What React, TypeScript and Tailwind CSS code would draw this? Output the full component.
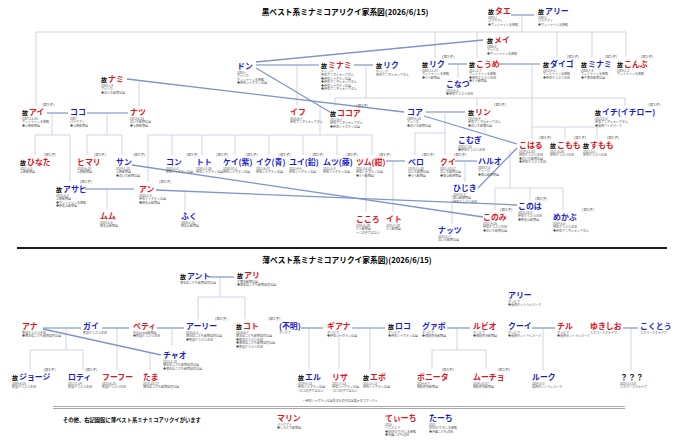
import React from "react"

type Node = {
    x: number
    y: number
    name: string
    c: "r" | "b" | "k"
    dead?: boolean
    twin?: boolean
    info?: string[]
}

const colorClass = {
    r: "text-[#e3121c]",
    b: "text-[#1e1ec8]",
    k: "text-[#222222]",
}

const topNodes: Node[] = [
    { x: 488, y: 11, name: "タエ", c: "r", dead: true, info: ["2003/?", "パラグアイ", "◆サンシャイン水族館"] },
    { x: 538, y: 11, name: "アリー", c: "b", dead: true, info: ["2003/?", "パラグアイ", "◆サンシャイン水族館"] },
    { x: 487, y: 40, name: "メイ", c: "r", dead: true, info: ["2006/5", "アメリカ", "◆サンシャイン水族館"] },
    { x: 237, y: 66, name: "ドン", c: "b", info: ["2005/?", "アメリカ", "サンシャイン水族館", "◆伊豆シャボテン公園"] },
    {
        x: 321, y: 65, name: "ミナミ", c: "r", dead: true,
        info: ["チリング", "伊豆アニマルキングダム", "◆伊豆シャボテン公園", "◆伊豆アニマルキングダム", "◆伊豆シャボテン公園", "◆伊豆アニマルキングダム"],
    },
    { x: 376, y: 65, name: "リク", c: "b", dead: true, info: ["チリング", "伊豆アニマルキングダム"] },
    { x: 422, y: 64, name: "リク", c: "b", dead: true, twin: true, info: ["2005/11/27", "サンシャイン水族館", "◆とべ動物園"] },
    {
        x: 469, y: 64, name: "こうめ", c: "r", dead: true,
        info: ["2011/2/7", "サンシャイン水族館", "◆伊豆どうぶつ王国", "◆とべ動物園"],
    },
    { x: 446, y: 84, name: "こなつ", c: "b", info: ["2015/5/2", "◆伊豆どうぶつ王国"] },
    { x: 543, y: 64, name: "ダイゴ", c: "b", dead: true, twin: true, info: ["2013/5/5", "サンシャイン水族館", "◆伊豆どうぶつ王国"] },
    { x: 581, y: 64, name: "ミナミ", c: "b", dead: true, twin: true, info: ["2006/7/8", "サンシャイン水族館", "◆千葉市動物公園"] },
    { x: 617, y: 64, name: "こんぶ", c: "r", dead: true, twin: true, info: ["2009/1/2", "サンシャイン水族館"] },
    { x: 101, y: 79, name: "ナミ", c: "r", dead: true, info: ["2003/?/9", "アメリカ", "◆のいち動物公園"] },
    { x: 22, y: 112, name: "アイ", c: "r", dead: true, twin: true, info: ["2007/12/26", "サンシャイン水族館", "◆上野動物園"] },
    { x: 70, y: 112, name: "ココ", c: "b", info: ["2007", "パラグアイ", "◆上野動物園"] },
    { x: 130, y: 112, name: "ナツ", c: "r", info: ["2013/6/25", "のいち動物公園", "◆上野動物園"] },
    { x: 290, y: 112, name: "イフ", c: "r", info: ["2016/6/7", "伊豆アニマルキングダム"] },
    { x: 330, y: 113, name: "ココア", c: "r", dead: true, twin: true, info: ["2012/6/7", "伊豆アニマルキングダム", "◆伊豆シャボテン公園"] },
    { x: 407, y: 112, name: "コア", c: "b", info: ["2009/5/23", "アメリカ", "◆のいち動物公園"] },
    { x: 468, y: 112, name: "リン", c: "r", dead: true, twin: true, info: ["2014/6/4", "伊豆アニマルキングダム", "◆のいち動物公園"] },
    { x: 595, y: 112, name: "イチ(イチロー)", c: "b", dead: true, twin: true, info: ["2013/8/3", "伊豆アニマルキングダム", "◆長崎バイオパーク"] },
    { x: 458, y: 140, name: "こむぎ", c: "b", info: ["2020/7/31", "◆伊豆どうぶつ王国"] },
    { x: 20, y: 162, name: "ひなた", c: "r", dead: true, twin: true, info: ["2021/2/5", "上野動物園"] },
    { x: 77, y: 162, name: "ヒマリ", c: "r", twin: true, info: ["2020/6/28", "上野動物園"] },
    { x: 116, y: 162, name: "サン", c: "b", twin: true, info: ["2019/1/13", "上野動物園", "◆のいち動物公園"] },
    { x: 166, y: 162, name: "コン", c: "b", twin: true, info: ["2020/2/3", "伊豆シャボテン公園"] },
    { x: 196, y: 162, name: "トト", c: "b", twin: true, info: ["2020/12/30", "伊豆シャボテン公園"] },
    { x: 223, y: 162, name: "ケイ(紫)", c: "b", twin: true, info: ["2020/10/1", "伊豆シャボテン公園"] },
    { x: 256, y: 162, name: "イク(青)", c: "b", twin: true, info: ["2021/6/27", "伊豆シャボテン公園"] },
    { x: 289, y: 162, name: "ユイ(鉛)", c: "b", twin: true, info: ["2022/4/4", "伊豆シャボテン公園"] },
    { x: 323, y: 162, name: "ムツ(藤)", c: "b", twin: true, info: ["2022/2/8", "伊豆シャボテン公園"] },
    { x: 356, y: 162, name: "ツム(紺)", c: "r", twin: true, info: ["2022/12/20", "伊豆シャボテン公園", "◆とべ動物園"] },
    { x: 408, y: 162, name: "ベロ", c: "b", twin: true, info: ["2019/11/30", "のいち動物公園", "◆とべ動物園"] },
    { x: 440, y: 162, name: "クイ", c: "r", twin: true, info: ["2021/10/17", "のいち動物公園", "◆東山動植物園"] },
    { x: 478, y: 161, name: "ハルオ", c: "b", info: ["2008/7/3", "アメリカ", "◆東山動植物園"] },
    { x: 519, y: 145, name: "こはる", c: "r", twin: true, info: ["2019/12/20", "伊豆どうぶつ王国", "◆のいち動物公園", "◆伊豆どうぶつ王国"] },
    { x: 550, y: 145, name: "こもも", c: "r", dead: true, twin: true, info: ["2021/3/20", "伊豆どうぶつ王国"] },
    { x: 583, y: 145, name: "すもも", c: "r", dead: true, twin: true, info: ["2022/3/1", "伊豆どうぶつ王国"] },
    { x: 453, y: 188, name: "ひじき", c: "b", info: ["2024/5/3", "東山動植物園", "伊豆どうぶつ王国"] },
    { x: 56, y: 189, name: "アサヒ", c: "b", dead: true, twin: true, info: ["2018/5/5", "上野動物園", "◆サンシャイン水族館", "◆野毛山動物園"] },
    { x: 139, y: 189, name: "アン", c: "r", twin: true, info: ["2020/2/3", "伊豆シャボテン公園", "◆野毛山動物園"] },
    { x: 100, y: 216, name: "ムム", c: "r", info: ["2025/5/5", "野毛山動物園"] },
    { x: 181, y: 216, name: "ふく", c: "b", info: ["2026/2/15", "野毛山動物園"] },
    { x: 356, y: 219, name: "こころ", c: "r", info: ["2025/6/30", "とべ動物園", "**この子ではない"] },
    { x: 386, y: 219, name: "イト", c: "r", info: ["2025/7/30", "とべ動物園"] },
    { x: 438, y: 230, name: "ナッツ", c: "b", info: ["2025/5/7", "のいち動物公園"] },
    { x: 483, y: 217, name: "このみ", c: "r", twin: true, info: ["2022/9/26", "伊豆どうぶつ王国", "◆のいち動物公園"] },
    { x: 518, y: 206, name: "このは", c: "b", twin: true, info: ["2023/10/3", "伊豆どうぶつ王国", "◆野毛山動物園"] },
    { x: 553, y: 217, name: "めかぶ", c: "b", twin: true, info: ["2024/5/5", "伊豆どうぶつ王国", "◆伊豆アニマルキングダム"] },
]

const midNodes: Node[] = [
    { x: 180, y: 276, name: "アント", c: "b", dead: true, info: ["埼玉県こども動物自然公園"] },
    { x: 237, y: 275, name: "アリ", c: "r", dead: true, info: ["千葉市動物公園", "◆埼玉県こども動物自然公園"] },
    { x: 508, y: 295, name: "アリー", c: "b", info: ["ボリビア", "◆長崎セントラルパーク"] },
    { x: 22, y: 326, name: "アナ", c: "r", info: ["那須どうぶつ王国", "◆埼玉県こども動物自然公園"] },
    { x: 83, y: 326, name: "ガイ", c: "b", info: ["那須どうぶつ王国"] },
    { x: 133, y: 326, name: "ベティ", c: "r", info: ["McFarland動物園", "◆那須どうぶつ王国"] },
    { x: 186, y: 326, name: "アーリー", c: "b", twin: true, info: ["2016/2/2", "埼玉県こども動物自然公園", "◆那須どうぶつ王国"] },
    {
        x: 236, y: 326, name: "コト", c: "r", dead: true, twin: true,
        info: ["2016/6/7", "埼玉県こども動物自然公園", "◆那須どうぶつ王国", "◆埼玉県こども動物自然公園", "◆那須どうぶつ王国"],
    },
    { x: 279, y: 326, name: "(不明)", c: "b", info: ["ボリビア"] },
    { x: 327, y: 326, name: "ギアナ", c: "r", info: ["ボリビア", "◆伊豆シャボテン公園"] },
    { x: 388, y: 326, name: "ロコ", c: "b", dead: true, info: ["ボリビア", "◆伊豆シャボテン公園"] },
    { x: 422, y: 326, name: "グァボ", c: "b", info: ["ボリビア", "◆相模原市動物園"] },
    { x: 473, y: 326, name: "ルビオ", c: "r", info: ["ボリビア", "◆相模原市動物園"] },
    { x: 508, y: 326, name: "クーイ", c: "b", info: ["ボリビア", "◆長崎セントラルパーク"] },
    { x: 557, y: 326, name: "チル", c: "r", info: ["ボリビア", "◆長崎セントラルパーク"] },
    { x: 590, y: 326, name: "ゆきしお", c: "r", info: ["ネオパークオキナワ"] },
    { x: 640, y: 326, name: "こくとう", c: "b", info: ["ネオパークオキナワ"] },
    { x: 163, y: 355, name: "チャオ", c: "b", info: ["2013/2/28", "埼玉県こども動物自然公園", "◆埼玉県こども動物自然公園"] },
    { x: 12, y: 377, name: "ジョージ", c: "b", dead: true, twin: true, info: ["2009/6/25", "那須どうぶつ王国"] },
    { x: 68, y: 377, name: "ロティ", c: "b", twin: true, info: ["2011/1/24", "那須どうぶつ王国"] },
    { x: 102, y: 377, name: "フーフー", c: "r", info: ["2013/6/25", "那須どうぶつ王国"] },
    { x: 143, y: 377, name: "たま", c: "r", info: ["2018/10/17", "埼玉県こども動物自然公園"] },
    { x: 298, y: 377, name: "エル", c: "b", dead: true, info: ["2019/5/13", "伊豆シャボテン公園", "*ロコの子ではない"] },
    { x: 332, y: 377, name: "リザ", c: "r", info: ["2021/7/22", "伊豆シャボテン公園", "*ロコの子ではない"] },
    { x: 363, y: 377, name: "エボ", c: "r", dead: true, info: ["2021/5/12", "伊豆シャボテン公園"] },
    { x: 417, y: 377, name: "ボニータ", c: "r", twin: true, info: ["2024/4/7", "相模原市動物園"] },
    { x: 473, y: 377, name: "ムーチョ", c: "r", twin: true, info: ["2024/10/27", "相模原市動物園"] },
    { x: 532, y: 377, name: "ルーク", c: "b", info: ["2024/3/3", "長崎セントラルパーク"] },
    { x: 620, y: 377, name: "？？？", c: "k", info: ["2025/12/20", "ネオパークオキナワ"] },
]

const bottomNodes: Node[] = [
    { x: 277, y: 418, name: "マリン", c: "r", info: ["パラグアイ", "◆しろとり動物園"] },
    { x: 385, y: 418, name: "てぃーち", c: "r", info: ["2016", "ベネズエラ", "◆DMMかりゆし水族館", "◆沖縄こどもの国"] },
    { x: 429, y: 418, name: "たーち", c: "b", info: ["2021", "DMMかりゆし水族館", "◆沖縄こどもの国"] },
]

// family lines, page coordinates
const topThin = [
    "M522 15V32", "M36 32H626", "M36 32V106", "M477 32V58", "M435 32V57", "M557 32V57", "M592 32V57", "M626 32V57",
    "M139 81V106", "M297 65V105", "M366 65V98", "M335 98H625", "M335 98V106", "M477 98V106", "M625 98V106",
    "M532 64V139", "M458 64V78",
    "M52 113V135", "M35 135H70", "M35 135V155", "M70 135V182",
    "M107 113V135", "M87 135H122", "M87 135V155", "M122 135V155",
    "M320 106V135", "M148 135H372", "M148 135V182", "M172 135V155", "M202 135V155", "M235 135V155", "M269 135V155",
    "M303 135V155", "M337 135V155", "M372 135V155",
    "M445 114V133", "M415 133H445", "M415 133V155", "M445 133V155", "M485 118V133",
    "M532 127H597", "M565 127V139", "M597 127V139",
    "M510 150V188", "M495 188H563", "M495 188V210", "M530 188V200", "M563 188V210",
    "M465 162V182", "M366 168V212", "M393 162V212", "M452 195V224", "M107 190V210", "M185 190V210",
]
const topPair = [
    "M511 15H534", "M47 113H68", "M87 113H128", "M256 65H319", "M354 65H373", "M448 64H467", "M499 64H540",
    "M426 112H465", "M386 161H405", "M455 161H477", "M85 189H134",
]
const topCross = [
    "M256 62L483 40", "M256 68L330 112", "M127 79L404 112", "M424 116L517 144", "M517 148L478 188",
    "M132 165L483 217", "M156 190L517 205",
]

const midThin = [
    "M220 277V297", "M198 297H245", "M198 297V319", "M245 297V319",
    "M66 328V350", "M30 350H83", "M30 350V370", "M83 350V370", "M117 328V370", "M172 328V346", "M150 353V370",
    "M309 328V369", "M339 333V369", "M370 328V369",
    "M457 328V350", "M432 350H486", "M432 350V369", "M486 350V369", "M543 328V370", "M631 328V370",
]
const midPair = [
    "M209 277H234", "M43 328H81", "M102 328H129", "M157 328H184", "M301 328H323", "M352 328H385", "M447 328H470",
    "M532 328H555", "M623 328H638",
]
const midCross = ["M43 329L161 355"]

function Lines({ viewBox, thin, pair, cross }: { viewBox: string; thin: string[]; pair: string[]; cross: string[] }) {
    return (
        <svg className="absolute inset-0 h-full w-full" viewBox={viewBox} fill="none">
            {thin.map((d) => (
                <path key={d} d={d} stroke="#c3cbdc" strokeWidth={0.8} />
            ))}
            {pair.map((d) => (
                <path key={d} d={d} stroke="#9eafd0" strokeWidth={1.6} />
            ))}
            {cross.map((d) => (
                <path key={d} d={d} stroke="#7f96c8" strokeWidth={1.3} />
            ))}
        </svg>
    )
}

function Animal({ n, top }: { n: Node; top: number }) {
    return (
        <div className="absolute whitespace-nowrap" style={{ left: n.x, top: n.y - top - 5 }}>
            <div className="relative flex items-end leading-[10px]">
                {n.dead && <span className="mr-[1px] text-[6px] leading-[9px] font-bold text-black">故</span>}
                <span className={`text-[7.9px] font-bold ${colorClass[n.c]}`}>{n.name}</span>
                {n.twin && (
                    <span className="absolute -top-[4px] left-[calc(100%-7px)] text-[3.8px] leading-[4px] text-[#444]">
                        (双1子)
                    </span>
                )}
            </div>
            {n.info && (
                <div className="mt-[1px] flex flex-col text-[3px] leading-[3.4px] text-[#555]">
                    {n.info.map((t, i) => (
                        <span key={i}>{t}</span>
                    ))}
                </div>
            )}
        </div>
    )
}

export default function App() {
    return (
        <div className="flex h-[446px] w-[680px] flex-col overflow-hidden bg-white font-['Noto_Sans_CJK_JP',sans-serif]">
            <section className="relative h-[247px] shrink-0">
                <Lines viewBox="0 0 680 247" thin={topThin} pair={topPair} cross={topCross} />
                <h1 className="relative pt-[7px] pl-[10px] text-center text-[7.7px] leading-[10px] font-bold text-black">
                    黒ベスト系ミナミコアリクイ家系図(2026/6/15)
                </h1>
                {topNodes.map((n, i) => (
                    <Animal key={i} n={n} top={0} />
                ))}
            </section>
            <div className="ml-[17px] mr-[13px] h-[2px] shrink-0 bg-[#1e1e1e]" />
            <section className="relative h-[157px] shrink-0">
                <Lines viewBox="0 249 680 157" thin={midThin} pair={midPair} cross={midCross} />
                <h1 className="relative pt-[6px] pl-[14px] text-center text-[7.7px] leading-[10px] font-bold text-black">
                    薄ベスト系ミナミコアリクイ家系図)(2026/6/15)
                </h1>
                {midNodes.map((n, i) => (
                    <Animal key={i} n={n} top={249} />
                ))}
                <p className="absolute top-[151px] left-[303px] text-[3px] leading-[3px] text-[#555]">
                    **伊豆シャボテン公園生まれの子は全員キタコアリクイ
                </p>
            </section>
            <div className="ml-[53px] mr-[55px] h-[3px] shrink-0 border-y border-[#a9a9a9]" />
            <section className="relative flex-1">
                <p className="pt-[8px] pl-[63px] text-[5.3px] leading-[6px] font-bold text-black">
                    その他、右記園館に薄ベスト系ミナミコアリクイがいます
                </p>
                {bottomNodes.map((n, i) => (
                    <Animal key={i} n={n} top={409} />
                ))}
            </section>
        </div>
    )
}
